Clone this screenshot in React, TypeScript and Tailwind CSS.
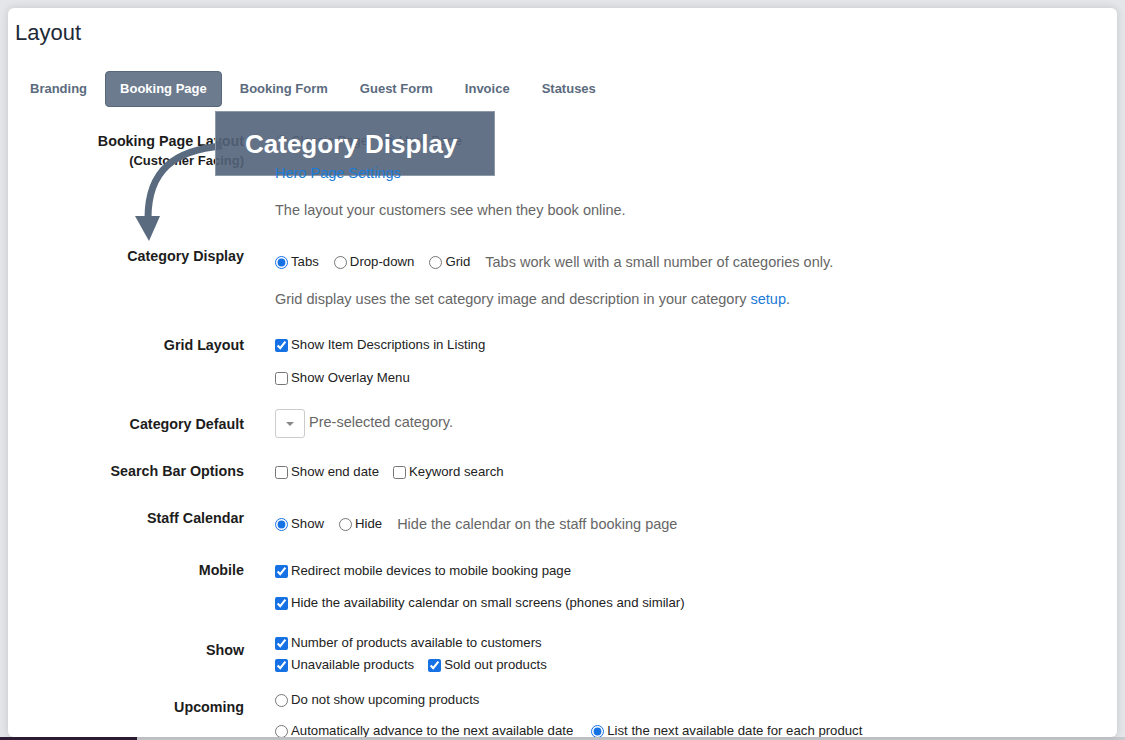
import React from 'react';

const tabs = ['Branding', 'Booking Page', 'Booking Form', 'Guest Form', 'Invoice', 'Statuses'];

function Check({ label, checked = false }: { label: string; checked?: boolean }) {
    return (
        <label className="inline-flex items-center text-[13.2px] leading-5 text-[#222]">
            <input type="checkbox" defaultChecked={checked} className="m-0 mr-[3px] w-[13px] h-[13px] accent-[#1671e5]" />
            {label}
        </label>
    );
}

function Radio({ label, name, checked = false }: { label: string; name: string; checked?: boolean }) {
    return (
        <label className="inline-flex items-center text-[13.2px] leading-5 text-[#222]">
            <input type="radio" name={name} defaultChecked={checked} className="m-0 mr-[3px] w-[13px] h-[13px] accent-[#1671e5]" />
            {label}
        </label>
    );
}

function Label({ children, className = '' }: { children: React.ReactNode; className?: string }) {
    return <div className={`text-right text-[14.3px] leading-5 font-bold text-[#1c1c1c] ${className}`}>{children}</div>;
}

export default function App() {
    return (
        <div className="w-[1125px] h-[740px] flex flex-col overflow-hidden bg-[#e5e6e9] font-['Liberation_Sans',Arial,sans-serif]">
            <div className="flex-1 mt-2 ml-2 mr-2 relative bg-white rounded-md shadow-[0_0_8px_rgba(0,0,0,0.14)] overflow-hidden">
                {/* Header */}
                <h1 className="ml-[7px] mt-[11px] text-[22px] leading-7 text-[#1e2a38]">Layout</h1>

                {/* Tabs */}
                <div className="flex gap-[4px] ml-[8px] mt-[24px]">
                    {tabs.map((t) =>
                        t === 'Booking Page' ? (
                            <div key={t} className="h-9 px-[14px] flex items-center rounded-[4px] bg-[#6c7b8e] border border-[#58677b] text-white text-[13px] font-bold">
                                {t}
                            </div>
                        ) : (
                            <div key={t} className="h-9 px-[14px] flex items-center text-[#5b6b7e] text-[13px] font-bold">
                                {t}
                            </div>
                        )
                    )}
                </div>

                {/* Form rows */}
                <div className="mt-[13px]">
                    {/* Booking page layout */}
                    <div className="grid grid-cols-[236px_1fr] gap-x-[31px] h-[116px]">
                        <Label className="pt-[11px]">
                            Booking Page Layout
                            <div className="text-[13px]">(Customer Facing)</div>
                        </Label>
                        <div className="pt-[11px]">
                            <div className="flex items-center gap-[15px]">
                                <Radio name="bpl" label="Classic Page" />
                                <Radio name="bpl" label="Hero Page" checked />
                            </div>
                            <div className="relative z-10 mt-[12px] text-[14.5px] leading-5 text-[#1b7bd6]">Hero Page Settings</div>
                            <div className="mt-[17px] text-[14.5px] leading-5 text-[#666]">The layout your customers see when they book online.</div>
                        </div>
                    </div>

                    {/* Category display */}
                    <div className="grid grid-cols-[236px_1fr] gap-x-[31px] h-[86px]">
                        <Label className="pt-[10px]">Category Display</Label>
                        <div className="pt-[16px]">
                            <div className="flex items-center gap-[15px]">
                                <Radio name="cd" label="Tabs" checked />
                                <Radio name="cd" label="Drop-down" />
                                <Radio name="cd" label="Grid" />
                                <span className="text-[14.5px] leading-5 text-[#666]">Tabs work well with a small number of categories only.</span>
                            </div>
                            <div className="mt-[17px] text-[14.5px] leading-5 text-[#666]">
                                Grid display uses the set category image and description in your category <span className="text-[#1b7bd6]">setup</span>.
                            </div>
                        </div>
                    </div>

                    {/* Grid layout */}
                    <div className="grid grid-cols-[236px_1fr] gap-x-[31px] h-[78px]">
                        <Label className="pt-[13px]">Grid Layout</Label>
                        <div className="pt-[13px] flex flex-col items-start gap-[13px]">
                            <Check label="Show Item Descriptions in Listing" checked />
                            <Check label="Show Overlay Menu" />
                        </div>
                    </div>

                    {/* Category default */}
                    <div className="grid grid-cols-[236px_1fr] gap-x-[31px] h-[52px]">
                        <Label className="pt-[14px]">Category Default</Label>
                        <div className="pt-[9px] flex items-start gap-[4px]">
                            <div className="w-[30px] h-[29px] border border-[#ccc] rounded-[3px] flex items-center justify-center">
                                <div className="w-0 h-0 border-l-[4px] border-r-[4px] border-t-[4px] border-l-transparent border-r-transparent border-t-[#888]" />
                            </div>
                            <span className="pt-[3px] text-[14.5px] leading-5 text-[#666]">Pre-selected category.</span>
                        </div>
                    </div>

                    {/* Search bar */}
                    <div className="grid grid-cols-[236px_1fr] gap-x-[31px] h-[48px]">
                        <Label className="pt-[9px]">Search Bar Options</Label>
                        <div className="pt-[10px] flex items-start gap-[14px]">
                            <Check label="Show end date" />
                            <Check label="Keyword search" />
                        </div>
                    </div>

                    {/* Staff calendar */}
                    <div className="grid grid-cols-[236px_1fr] gap-x-[31px] h-[50px]">
                        <Label className="pt-[8px]">Staff Calendar</Label>
                        <div className="pt-[14px] flex items-start gap-[15px]">
                            <Radio name="sc" label="Show" checked />
                            <Radio name="sc" label="Hide" />
                            <span className="text-[14.5px] leading-5 text-[#666]">Hide the calendar on the staff booking page</span>
                        </div>
                    </div>

                    {/* Mobile */}
                    <div className="grid grid-cols-[236px_1fr] gap-x-[31px] h-[75px]">
                        <Label className="pt-[10px]">Mobile</Label>
                        <div className="pt-[11px] flex flex-col items-start gap-[12px]">
                            <Check label="Redirect mobile devices to mobile booking page" checked />
                            <Check label="Hide the availability calendar on small screens (phones and similar)" checked />
                        </div>
                    </div>

                    {/* Show */}
                    <div className="grid grid-cols-[236px_1fr] gap-x-[31px] h-[60px]">
                        <Label className="pt-[15px]">Show</Label>
                        <div className="pt-[8px] flex flex-col items-start gap-[2px]">
                            <Check label="Number of products available to customers" checked />
                            <div className="flex items-start gap-[14px]">
                                <Check label="Unavailable products" checked />
                                <Check label="Sold out products" checked />
                            </div>
                        </div>
                    </div>

                    {/* Upcoming */}
                    <div className="grid grid-cols-[236px_1fr] gap-x-[31px]">
                        <Label className="pt-[12px]">Upcoming</Label>
                        <div className="pt-[5px] flex flex-col items-start gap-[11px]">
                            <Radio name="up" label="Do not show upcoming products" />
                            <div className="flex items-start gap-[18px]">
                                <Radio name="up" label="Automatically advance to the next available date" />
                                <Radio name="up" label="List the next available date for each product" checked />
                            </div>
                        </div>
                    </div>
                </div>

                {/* Annotation arrow */}
                <svg className="absolute left-0 top-0 pointer-events-none" width="300" height="260" viewBox="0 0 300 260">
                    <path d="M 214 138 C 167 142, 140 162, 140 210" fill="none" stroke="#5a6a7f" strokeWidth="7" />
                    <polygon points="127,208 152,208 141,233" fill="#5a6a7f" />
                </svg>

                {/* Annotation callout */}
                <div className="absolute left-[207px] top-[103px] w-[280px] h-[65px] flex items-center pl-[29px] bg-[rgba(83,99,122,0.9)] border border-[#8e99a7]">
                    <span className="text-white text-[26px] font-bold leading-none">Category Display</span>
                </div>
            </div>
            <div className="h-[3px] flex">
                <div className="w-[137px] bg-[#2e1d36]" />
                <div className="flex-1 bg-[#c9cacd]" />
            </div>
        </div>
    );
}
